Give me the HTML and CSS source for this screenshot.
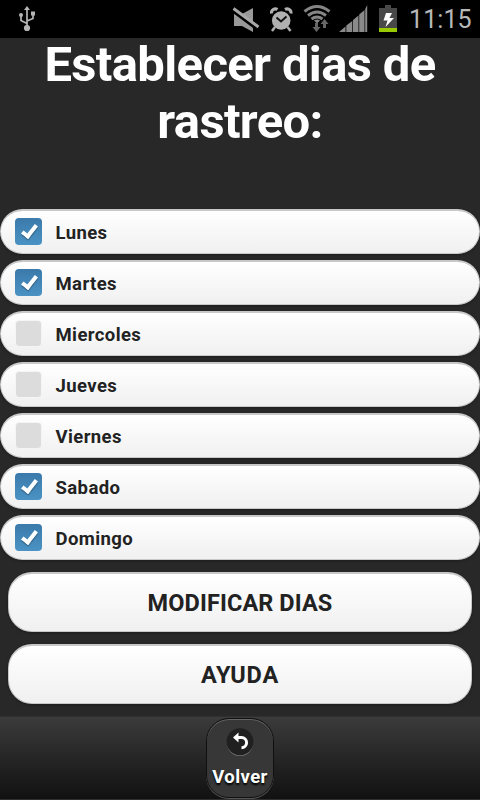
FILE: index.html
```
<!DOCTYPE html>
<html lang="es">
<head>
  <meta charset="UTF-8">
  <meta name="viewport" content="width=device-width, initial-scale=1.0">

  <title>Dias de rastreo</title>

  <link rel="stylesheet" href="styles.css">

</head>
<body>

  <div class="statusbar">
    <svg class="usb" width="18" height="26" viewBox="0 0 18 26">
      <path d="M9 3v20M9 17.500l-6-3V10M9 15l6-2.500V8" fill="none" stroke="#b5b5b5" stroke-width="1.700"/>
      <path d="M9 0l3 4H6z" fill="#b5b5b5"/>
      <circle cx="3" cy="9" r="2" fill="#b5b5b5"/>
      <rect x="13" y="5.500" width="4" height="4" fill="#b5b5b5"/>
      <circle cx="9" cy="22" r="3.100" fill="#b5b5b5"/>
    </svg>
    <svg class="icons" width="165" height="38" viewBox="232 0 165 38">
      <!-- silent -->
      <path d="M234 14h8l11-6v24l-11-6h-8z" fill="#999"/>
      <path d="M232 10.500l27 20" stroke="#000" stroke-width="3"/>
      <path d="M233.500 8.500l25 18.500" stroke="#a8a8a8" stroke-width="3"/>
      <!-- alarm -->
      <path d="M271.500 13.500a4 4 0 0 1 6-4M291 13.500a4 4 0 0 0-6-4" fill="none" stroke="#b0b0b0" stroke-width="3"/>
      <path d="M275 27l-3 4M287.500 27l3 4" stroke="#b0b0b0" stroke-width="2.500"/>
      <circle cx="281.200" cy="20.500" r="9.300" fill="#b0b0b0"/>
      <path d="M276.500 17.500l4.500 4 5.500-5" fill="none" stroke="#111" stroke-width="2"/>
      <!-- wifi -->
      <g fill="none" stroke="#858585" stroke-width="3">
        <path d="M304.500 11.500q12.500-10 25 0"/>
        <path d="M308 15.500q9-7 18 0"/>
        <path d="M311.500 19q5.500-4 11 0"/>
      </g>
      <path d="M314 20.500q3-2 6 0l-3 3z" fill="#858585"/>
      <path d="M316.500 32l-4-5h2.500v-4h3v4h2.500zM324.500 19l4 5H326v4h-3v-4h-2.500z" fill="#666"/>
      <!-- signal -->
      <path d="M339 32l6.500-5.500V32zM346.300 32v-6.500l6-4.500V32zM353 32V20l5.500-4.500V32zM359.200 32V14.500l5.300-4.500v22zM365.200 32V9l2-4v27z" fill="#8a8a8a"/>
      <!-- battery -->
      <path d="M379 8h6V5h6v3h6v20h-18z" fill="#484848"/>
      <path d="M379 28h18v4h-18z" fill="#98c903"/>
      <path d="M386 13h6l-2.500 5h4.500l-8.500 9 2-6.500h-4z" fill="#fff"/>
    </svg>
    <span class="clock">11:15</span>
  </div>

  <div class="content">
    <h1>Establecer dias de<br>rastreo:</h1>

    <div class="dias">
      <label class="dia"><input type="checkbox" checked><span class="box"></span>Lunes</label>
      <label class="dia"><input type="checkbox" checked><span class="box"></span>Martes</label>
      <label class="dia"><input type="checkbox"><span class="box"></span>Miercoles</label>
      <label class="dia"><input type="checkbox"><span class="box"></span>Jueves</label>
      <label class="dia"><input type="checkbox"><span class="box"></span>Viernes</label>
      <label class="dia"><input type="checkbox" checked><span class="box"></span>Sabado</label>
      <label class="dia"><input type="checkbox" checked><span class="box"></span>Domingo</label>
    </div>

    <button class="btn">MODIFICAR DIAS</button>
    <button class="btn ayuda">AYUDA</button>
  </div>

  <div class="footer">
    <a class="volver">
      <svg width="28" height="28" viewBox="0 0 28 28">
        <circle cx="14" cy="14.800" r="13.200" fill="#777"/>
        <circle cx="14" cy="13.800" r="13.500" fill="#202020"/>
        <path d="M11 9.500h4.500a5 5 0 0 1 0 10.200" fill="none" stroke="#fff" stroke-width="3"/>
        <path d="M7 9.500l5.500-5v10z" fill="#fff"/>
      </svg>
      <span>Volver</span>
    </a>
  </div>

</body>
</html>
```
FILE: styles.css
```
body{
  margin:0;
  height:800px;
  overflow:hidden;
  display:flex;
  flex-direction:column;
  background-color:#282828;
  font-family:Roboto, "Liberation Sans", sans-serif;
}
.statusbar{
  height:38px;
  flex:none;
  display:flex;
  background-color:#000;
}
.usb{
  margin:6px 0 0 18px;
}
.icons{
  margin-left:196px;
}
.clock{
  margin-left:12px;
  font-size:25px;
  line-height:40px;
  letter-spacing:0.1px;
  color:#b8b8b8;
}
.content{
  height:678px;
  flex:none;
  display:flex;
  flex-direction:column;
}
h1{
  height:173px;
  margin:-2px 0 0;
  font-size:49px;
  line-height:57px;
  letter-spacing:-0.65px;
  text-align:center;
  color:#fff;
}
.dias{
  display:flex;
  flex-direction:column;
  gap:6px;
  margin-bottom:12px;
}
.dia, .btn{
  box-sizing:border-box;
  border:1px solid #c8c8c8;
  border-top-width:2px;
  background:linear-gradient(#fff, #f0f0f0);
  color:#222;
  box-shadow:0 1px 3px rgba(0,0,0,0.3);
}
.dia{
  display:flex;
  align-items:center;
  height:45px;
  padding:2px 0 0 14px;
  border-radius:23px;
  font-size:18.500px;
  font-weight:bold;
  letter-spacing:0.4px;
}
.dia input{
  display:none;
}
.box{
  box-sizing:border-box;
  width:27px;
  height:27px;
  margin:-4px 13.500px 0 0;
  border:1px solid #f5f5f5;
  border-radius:4px;
  background:#dcdcdc;
}
.dia input:checked + .box{
  border:none;
  background:linear-gradient(#3b7aab, #4a93c4);
}
.dia input:checked + .box::after{
  content:"";
  display:block;
  width:5px;
  height:12px;
  margin:4px 0 0 10px;
  border:solid #fff;
  border-width:0 4.500px 4.500px 0;
  transform:rotate(38deg);
  box-shadow:1px 1px 1px rgba(0,0,0,0.3);
}
.btn{
  height:60px;
  flex:none;
  margin:0 8px 12px;
  padding-top:1px;
  border-radius:24px;
  font-family:inherit;
  font-size:23.500px;
  font-weight:bold;
  letter-spacing:0.1px;
}
.ayuda{
  letter-spacing:0.8px;
}
.footer{
  height:84px;
  flex:none;
  box-sizing:border-box;
  display:flex;
  justify-content:center;
  border-top:1px solid #303030;
  border-bottom:1px solid #303030;
  background:linear-gradient(#3b3b3b, #111);
}
.volver{
  box-sizing:border-box;
  width:68px;
  height:80px;
  margin-top:1px;
  padding-top:9px;
  display:flex;
  flex-direction:column;
  align-items:center;
  border:1px solid #101010;
  border-radius:23px;
  background:#373737;
  box-shadow:inset 0 1px 0 #666, 0 1px 0 #555;
  color:#fff;
  font-size:18.500px;
  line-height:22px;
  font-weight:bold;
  letter-spacing:0.4px;
  text-shadow:0 2px 2px #000;
}
.volver span{
  margin-top:10px;
}
```
